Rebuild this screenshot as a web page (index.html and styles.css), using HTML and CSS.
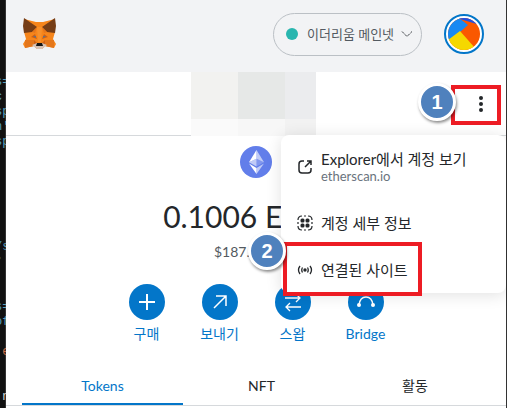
FILE: index.html
```html
<!DOCTYPE html>
<html lang="ko">
<head>
<meta charset="utf-8">
<meta name="viewport" content="width=device-width, initial-scale=1">
<title>MetaMask</title>
<link rel="stylesheet" href="styles.css">
</head>
<body>
<div class="desktop">
<pre class="terminal" aria-hidden="true"><code>



s=
c
sp
n'
sp






/s
°


s=
of

<span class="terminal-warn"> e</span>


<span class="terminal-plain"> n</span></code></pre>
<main class="wallet">
  <header class="topbar">
    <svg class="fox" viewBox="0 0 33 32" role="img" aria-label="MetaMask">
      <path fill="#f6851b" d="M1 1 13 4H20L32 1 32 14 30 21 33 26 31 30 22 28 19 31H14L11 28 2 30 0 26 3 21 1 14Z"/>
      <path fill="#763d16" d="M1 0 14 9 9 14 1 15 0 8ZM32 0 19 9 24 14 32 15 33 8Z"/>
      <path fill="#e4761b" d="M2 22 11 22 11 28 2 30ZM31 22 22 22 22 28 31 30ZM14 9 12 15 9 14ZM19 9 21 15 24 14Z"/>
      <path fill="#cd6116" d="M8 19 12 16 14 21ZM25 19 21 16 19 21ZM11 22 14 25 11 28ZM22 22 19 25 22 28Z"/>
      <path fill="#f89b3c" d="M14 9H19L18 24H15Z" opacity=".5"/>
      <path fill="#60708a" d="M10 18 13 18 13 20ZM23 18 20 18 20 20Z"/>
      <path fill="#d7c1b3" d="M9 27 14 25H19L24 27 19 31H14Z"/>
      <path fill="#161616" d="M14 25H19L20 28H13Z"/>
    </svg>
    <label class="network">
      <span class="network-dot"></span>
      <select class="network-select" aria-label="네트워크"><option>이더리움 메인넷</option></select>
      <svg class="chevron" viewBox="0 0 12 8"><path d="M1 1.5 6 6.5 11 1.5" fill="none" stroke="#3c4045" stroke-dasharray="3 1"/></svg>
    </label>
    <button class="avatar" aria-label="계정">
      <svg viewBox="0 0 32 32">
        <clipPath id="round"><circle cx="16" cy="16" r="16"/></clipPath>
        <g clip-path="url(#round)">
          <path fill="#fa5800" d="M0 0H32V32H0Z"/>
          <path fill="#2350e1" d="M8 0H32V7L12 1Z"/>
          <path fill="#1889f2" d="M0 0H11L20 7 12 14 0 23Z"/>
          <path fill="#f5d800" d="M0 22 12 13 27 30 22 32H0Z"/>
        </g>
      </svg>
    </button>
  </header>

  <section class="account">
    <div class="redacted"><i></i><i></i><i></i><i></i><i></i><i></i></div>
    <button class="kebab" aria-label="계정 옵션">
      <svg viewBox="0 0 4 18"><g fill="#24272a"><circle cx="2" cy="3" r="2"/><circle cx="2" cy="9" r="2"/><circle cx="2" cy="15" r="2"/></g></svg>
    </button>
    <span class="frame frame-kebab"></span>
    <span class="step step-one">1</span>
    <div class="menu">
      <a class="menu-item menu-item-tall" href="#">
        <svg viewBox="0 0 16 16"><path d="M7 2H5Q2 2 2 5V11Q2 14 5 14H11Q14 14 14 11V9M10 2H14V6M14 2 8 8" fill="none" stroke="#24272a" stroke-width="1.5"/></svg>
        <span>Explorer에서 계정 보기<small>etherscan.io</small></span>
      </a>
      <button class="menu-item">
        <svg viewBox="0 0 16 16"><path d="M5 1Q1 1 1 5M11 1Q15 1 15 5M1 11Q1 15 5 15M15 11Q15 15 11 15M7 1H9M7 15H9M1 7V9M15 7V9" fill="none" stroke="#24272a" stroke-width="1.2"/><g fill="#24272a"><rect x="3.500" y="3.500" width="4" height="4" rx="1.500"/><rect x="8.500" y="3.500" width="4" height="4" rx="1.500"/><rect x="3.500" y="8.500" width="4" height="4" rx="1.500"/><rect x="8.500" y="8.500" width="4" height="4" rx="1.500"/></g></svg>
        <span>계정 세부 정보</span>
      </button>
      <button class="menu-item">
        <svg viewBox="0 0 16 16"><circle cx="8" cy="8" r="1.7" fill="#24272a"/><path d="M3 4Q0 8 3 12M13 4Q16 8 13 12M5.5 5.5Q4 8 5.5 10.500M10.500 5.500Q12 8 10.500 10.500" fill="none" stroke="#24272a" stroke-width="1.300"/></svg>
        <span>연결된 사이트</span>
      </button>
      <span class="frame frame-sites"></span>
      <span class="step step-two">2</span>
    </div>
  </section>

  <section class="balance">
    <svg class="eth" viewBox="0 0 32 32" role="img" aria-label="ETH">
      <circle cx="16" cy="16" r="16" fill="#627eea"/>
      <g fill="#fff"><path opacity=".6" d="M16.500 4V12.870L24 16.220Z"/><path d="M16.500 4 9 16.220 16.500 12.870Z"/><path opacity=".6" d="M16.500 21.970V28L24 17.620Z"/><path d="M16.500 28V21.970L9 17.620Z"/><path opacity=".2" d="M16.500 20.570 24 16.220 16.500 12.870Z"/><path opacity=".6" d="M9 16.220 16.500 20.570V12.870Z"/></g>
    </svg>
    <p class="amount">0.1006 ETH</p>
    <p class="fiat">$187.98 USD</p>
  </section>

  <nav class="actions">
    <button class="action"><svg viewBox="0 0 36 36"><path d="M18 10V26M10 18H26" stroke-width="2"/></svg>구매</button>
    <button class="action"><svg viewBox="0 0 36 36"><path d="M12 24 24 12M14 12H24V22" stroke-width="1.500"/></svg>보내기</button>
    <button class="action"><svg viewBox="0 0 36 36"><path d="M10 14H25M21 10 25 14 21 18M26 23H11M15 19 11 23 15 27" stroke-width="1.300"/></svg>스왑</button>
    <button class="action"><svg viewBox="0 0 36 36"><path d="M11 21Q12 13 18 13T25 21" stroke-width="1.500"/><g fill="#fff" stroke="none"><circle cx="11" cy="21" r="2"/><circle cx="25" cy="21" r="2"/></g></svg>Bridge</button>
  </nav>

  <div class="tabs" role="tablist">
    <button class="tab tab-active" role="tab" aria-selected="true">Tokens</button>
    <button class="tab" role="tab" aria-selected="false">NFT</button>
    <button class="tab" role="tab" aria-selected="false">활동</button>
  </div>
</main>
</div>
</body>
</html>
```
FILE: styles.css
```css
* { box-sizing: border-box; }

body {
  margin: 0;
  background: #fff;
  color: #24272a;
  font: 14px/20px Lato, "Noto Sans CJK KR", sans-serif;
}

button, select {
  margin: 0;
  padding: 0;
  border: 0;
  background: none;
  color: inherit;
  font: inherit;
}

p { margin: 0; }
svg { display: block; flex: none; }

.desktop {
  display: grid;
  grid-template-columns: 6px minmax(0, 1fr);
  height: 100vh;
  overflow: hidden;
}

.terminal {
  margin: 0;
  padding-top: 15px;
  overflow: hidden;
  background: #111;
  box-shadow: inset -1px 0 #333;
  color: #5a9fbd;
  font: 12px/15px "Liberation Mono", monospace;
}
.terminal code {
  display: block;
  margin-left: -5px;
  font: inherit;
}
.terminal-warn { color: #c96f4a; }
.terminal-plain { color: #ddd; }

.wallet { border-right: 1px solid #333; }

.topbar {
  display: flex;
  align-items: center;
  height: 72px;
  padding: 0 22px 4px 17px;
  background: #f2f3f5;
}
.fox { width: 33px; height: 32px; }
.network {
  display: flex;
  align-items: center;
  width: 149px;
  height: 43px;
  margin-left: auto;
  padding: 0 8px 0 12px;
  border: 1px solid #bbc0c5;
  border-radius: 22px;
}
.network-dot {
  width: 12px;
  height: 12px;
  margin-right: 9px;
  border-radius: 50%;
  background: #29b6af;
}
.network-select {
  flex: 1;
  min-width: 0;
  appearance: none;
  color: #535a61;
  font-size: 13px;
}
.chevron { width: 12px; height: 8px; }
.avatar {
  width: 40px;
  height: 40px;
  margin-left: 22px;
  padding: 2px;
  border: 2px solid #0376c9;
  border-radius: 50%;
  background: #fff;
}

.account {
  position: relative;
  display: grid;
  grid-template-columns: 185fr auto 189fr;
  height: 64px;
  border-bottom: 1px solid #d6d9dc;
}
.redacted {
  grid-column: 2;
  display: grid;
  grid-template: 47px 17px / 47px 47px 31px;
}
.redacted i { background: #f2f2f0; }
.redacted i:nth-child(2) { background: #e6e8e7; }
.redacted i:nth-child(3) { background: #ebecee; }
.redacted i:nth-child(4) { background: #fafafa; }
.redacted i:nth-child(5) { background: #f7f7f7; }
.redacted i:nth-child(6) { background: #f2f2f2; }
.kebab {
  justify-self: end;
  align-self: center;
  padding: 6px;
  margin-right: 17px;
}
.kebab svg { width: 4px; height: 18px; }

.menu {
  position: absolute;
  z-index: 2;
  top: 63px;
  right: 0;
  width: 225px;
  border-radius: 8px;
  background: #fff;
  box-shadow: 0 2px 16px rgba(0, 0, 0, .12);
}
.menu-item {
  display: flex;
  align-items: center;
  gap: 8px;
  width: 100%;
  min-height: 47px;
  padding: 0 16px;
  color: #24272a;
  font-size: 15px;
  line-height: 18px;
  text-align: left;
  text-decoration: none;
}
.menu-item-tall { min-height: 64px; }
.menu-item svg { width: 16px; height: 16px; }
.menu-item small {
  display: block;
  color: #6a737d;
  font-size: 13px;
  line-height: 16px;
}

.frame {
  position: absolute;
  border: 4px solid #ed1c24;
}
.frame-kebab { top: 13px; right: 5px; width: 50px; height: 40px; }
.frame-sites { top: 107px; left: 2px; width: 139px; height: 54px; }

.step {
  position: absolute;
  z-index: 3;
  width: 38px;
  height: 38px;
  border: 3px solid #fff;
  border-radius: 50%;
  background: #4f81bd;
  box-shadow: 1px 2px 3px rgba(0, 0, 0, .45);
  color: #fff;
  font: bold 20px/32px "Liberation Sans", sans-serif;
  text-align: center;
}
.step-one { top: 11px; right: 50px; }
.step-two { top: 97px; left: -33px; }

.balance {
  display: flex;
  flex-direction: column;
  align-items: center;
  padding-top: 10px;
}
.eth { width: 32px; height: 32px; }
.amount {
  margin-top: 16px;
  padding-right: 26px;
  font-size: 30px;
  line-height: 44px;
}
.fiat {
  margin-top: 2px;
  color: #535a61;
  line-height: 24px;
}

.actions {
  display: flex;
  justify-content: center;
  gap: 9px;
  margin-top: 20px;
}
.action {
  display: flex;
  flex-direction: column;
  align-items: center;
  gap: 4px;
  width: 64px;
  color: #0376c9;
}
.action svg {
  width: 36px;
  height: 36px;
  border-radius: 50%;
  background: #0376c9;
  fill: none;
  stroke: #fff;
}

.tabs {
  display: grid;
  grid-template-columns: 161fr 157fr 150fr;
  margin-top: 24px;
  padding: 0 16px;
  border-bottom: 1px solid #d6d9dc;
}
.tab {
  height: 37px;
  border-bottom: 2px solid transparent;
}
.tab-active {
  border-color: #0376c9;
  color: #0376c9;
}
```
